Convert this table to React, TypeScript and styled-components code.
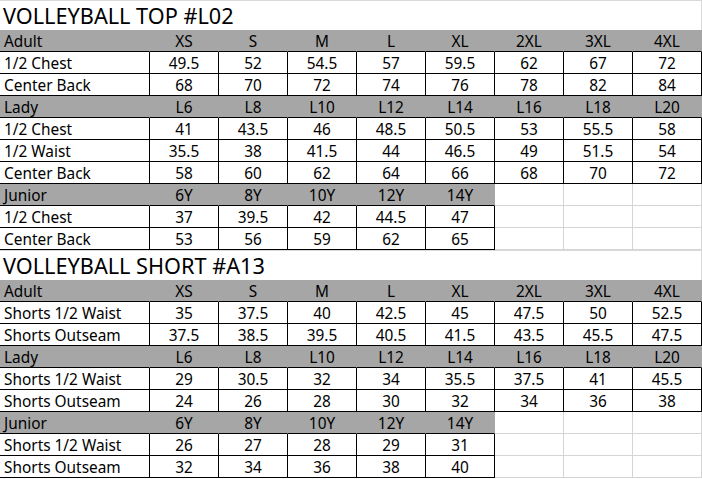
import React from 'react';
import styled, { createGlobalStyle } from 'styled-components';

const GlobalStyle = createGlobalStyle`
    html, body {
        margin: 0;
        padding: 0;
        background: #ffffff;
    }
    body {
        font-family: "Noto Sans", "Open Sans", sans-serif;
        color: #000000;
    }
`;

const Sheet = styled.div`
    width: 702px;
    display: flex;
    flex-direction: column;
`;

const Row = styled.div<{ $title?: boolean }>`
    display: grid;
    grid-template-columns: 150px repeat(8, 69px);
    height: ${p => (p.$title ? '30px' : '22px')};
`;

const Title = styled.div`
    grid-column: 1 / -1;
    box-sizing: border-box;
    border-top: 1px solid #d9d9d9;
    border-right: 1px solid #d9d9d9;
    padding-left: 3px;
    font-size: 21.7px;
    line-height: 30px;
    white-space: nowrap;
`;

type Kind = 'head' | 'data' | 'empty';

const Cell = styled.div<{ $kind: Kind; $label?: boolean }>`
    box-sizing: border-box;
    display: flex;
    align-items: center;
    justify-content: ${p => (p.$label ? 'flex-start' : 'center')};
    padding-left: ${p => (p.$label ? '4px' : '0')};
    padding-top: 2px;
    font-size: 15.4px;
    white-space: nowrap;
    overflow: hidden;
    background: ${p => (p.$kind === 'head' ? '#a6a6a6' : '#ffffff')};
    border-bottom: 1px solid ${p => (p.$kind === 'empty' ? '#d4d4d4' : '#000000')};
    border-right: 1px solid
        ${p => (p.$kind === 'data' ? '#000000' : p.$kind === 'empty' ? '#d4d4d4' : 'transparent')};
`;

type Block = {
    group: string;
    sizes: string[];
    rows: [string, (string | number)[]][];
};

type Section = {
    title: string;
    blocks: Block[];
};

const sections: Section[] = [
    {
        title: 'VOLLEYBALL TOP #L02',
        blocks: [
            {
                group: 'Adult',
                sizes: ['XS', 'S', 'M', 'L', 'XL', '2XL', '3XL', '4XL'],
                rows: [
                    ['1/2 Chest', [49.5, 52, 54.5, 57, 59.5, 62, 67, 72]],
                    ['Center Back', [68, 70, 72, 74, 76, 78, 82, 84]],
                ],
            },
            {
                group: 'Lady',
                sizes: ['L6', 'L8', 'L10', 'L12', 'L14', 'L16', 'L18', 'L20'],
                rows: [
                    ['1/2 Chest', [41, 43.5, 46, 48.5, 50.5, 53, 55.5, 58]],
                    ['1/2 Waist', [35.5, 38, 41.5, 44, 46.5, 49, 51.5, 54]],
                    ['Center Back', [58, 60, 62, 64, 66, 68, 70, 72]],
                ],
            },
            {
                group: 'Junior',
                sizes: ['6Y', '8Y', '10Y', '12Y', '14Y'],
                rows: [
                    ['1/2 Chest', [37, 39.5, 42, 44.5, 47]],
                    ['Center Back', [53, 56, 59, 62, 65]],
                ],
            },
        ],
    },
    {
        title: 'VOLLEYBALL SHORT #A13',
        blocks: [
            {
                group: 'Adult',
                sizes: ['XS', 'S', 'M', 'L', 'XL', '2XL', '3XL', '4XL'],
                rows: [
                    ['Shorts 1/2 Waist', [35, 37.5, 40, 42.5, 45, 47.5, 50, 52.5]],
                    ['Shorts Outseam', [37.5, 38.5, 39.5, 40.5, 41.5, 43.5, 45.5, 47.5]],
                ],
            },
            {
                group: 'Lady',
                sizes: ['L6', 'L8', 'L10', 'L12', 'L14', 'L16', 'L18', 'L20'],
                rows: [
                    ['Shorts 1/2 Waist', [29, 30.5, 32, 34, 35.5, 37.5, 41, 45.5]],
                    ['Shorts Outseam', [24, 26, 28, 30, 32, 34, 36, 38]],
                ],
            },
            {
                group: 'Junior',
                sizes: ['6Y', '8Y', '10Y', '12Y', '14Y'],
                rows: [
                    ['Shorts 1/2 Waist', [26, 27, 28, 29, 31]],
                    ['Shorts Outseam', [32, 34, 36, 38, 40]],
                ],
            },
        ],
    },
];

const fill = (n: number) => Array.from({ length: 8 - n }, (_, i) => <Cell key={'e' + i} $kind="empty" />);

const SizeBlock = ({ block }: { block: Block }) => (
    <>
        <Row>
            <Cell $kind="head" $label>{block.group}</Cell>
            {block.sizes.map(s => (
                <Cell key={s} $kind="head">{s}</Cell>
            ))}
            {fill(block.sizes.length)}
        </Row>
        {block.rows.map(([name, vals]) => (
            <Row key={name}>
                <Cell $kind="data" $label>{name}</Cell>
                {vals.map((v, i) => (
                    <Cell key={i} $kind="data">{v}</Cell>
                ))}
                {fill(vals.length)}
            </Row>
        ))}
    </>
);

const App = () => (
    <>
        <GlobalStyle />
        <Sheet>
            {sections.map(sec => (
                <React.Fragment key={sec.title}>
                    <Row $title>
                        <Title>{sec.title}</Title>
                    </Row>
                    {sec.blocks.map(b => (
                        <SizeBlock key={b.group} block={b} />
                    ))}
                </React.Fragment>
            ))}
        </Sheet>
    </>
);

export default App;
